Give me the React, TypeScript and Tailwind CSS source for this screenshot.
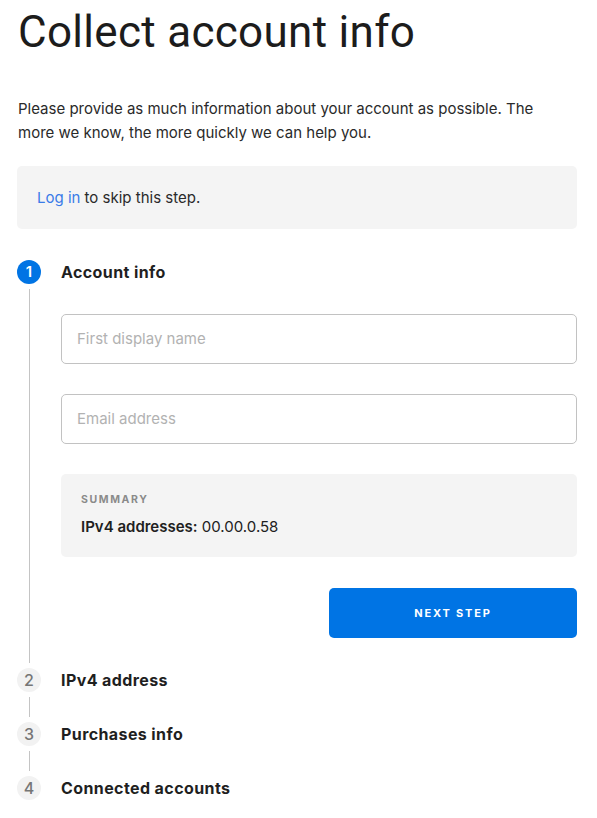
import React from "react";

function StepCircle({ n, active }: { n: number; active?: boolean }) {
  return (
    <div
      className={
        active
          ? "w-6 h-6 rounded-full bg-[#0074e4] text-white flex items-center justify-center text-[15px] font-semibold shrink-0"
          : "w-6 h-6 rounded-full bg-[#f2f2f2] text-[#767676] flex items-center justify-center text-[16px] font-medium shrink-0"
      }
    >
      {n}
    </div>
  );
}

function Step({
  n,
  title,
  active,
  line,
  children,
}: {
  n: number;
  title: string;
  active?: boolean;
  line: boolean;
  children?: React.ReactNode;
}) {
  return (
    <div className="flex">
      <div className="w-6 flex flex-col items-center shrink-0">
        <StepCircle n={n} active={active} />
        {line && <div className="w-px flex-1 bg-[#c4c4c4] my-[5px]" />}
      </div>
      <div className={"flex-1 ml-5 " + (line ? "pb-[30px]" : "")}>
        <div className="h-6 flex items-center text-[16px] font-bold text-[#1f1f1f] tracking-[0.4px]">
          {title}
        </div>
        {children}
      </div>
    </div>
  );
}

export default function App() {
  return (
    <div
      className="w-[597px] min-h-[818px] bg-white pl-[17px] pr-5 text-[#202020]"
      style={{ fontFamily: "Inter, 'Liberation Sans', sans-serif" }}
    >
      <h1
        className="pt-[6px] text-[44px] leading-[52px] font-normal tracking-[0.3px] text-[#1c1c1c] pl-px"
        style={{ fontFamily: "Roboto, 'Liberation Sans', sans-serif" }}
      >
        Collect account info
      </h1>
      <p className="mt-[39px] max-w-[540px] text-[15px] leading-[24px] text-[#2a2a2a] pl-px">
        Please provide as much information about your account as possible. The
        more we know, the more quickly we can help you.
      </p>
      <div className="mt-[21px] h-[63px] rounded-[5px] bg-[#f4f4f4] flex items-center px-5 text-[15px] text-[#2a2a2a] pt-px">
        <span>
          <a className="text-[#3a7be8]">Log in</a> to skip this step.
        </span>
      </div>

      <div className="mt-[31px]">
        <Step n={1} title="Account info" active line>
          <div className="pt-[30px] flex flex-col">
            <div className="h-[50px] rounded-[5px] border border-[#c2c2c2] flex items-center px-[15px] text-[15px] text-[#b2b2b2]">
              First display name
            </div>
            <div className="mt-[30px] h-[50px] rounded-[5px] border border-[#c2c2c2] flex items-center px-[15px] text-[15px] text-[#b2b2b2]">
              Email address
            </div>
            <div className="mt-[30px] h-[83px] rounded-[5px] bg-[#f4f4f4] px-5 pt-[19px]">
              <div className="text-[10.5px] font-bold tracking-[1.6px] text-[#8a8a8a] leading-[14px]">
                SUMMARY
              </div>
              <div className="mt-[10px] text-[15px] leading-[20px] text-[#202020]">
                <span className="font-semibold">IPv4 addresses:</span> 00.00.0.58
              </div>
            </div>
            <div className="mt-[31px] flex justify-end">
              <button className="w-[248px] h-[50px] rounded-[5px] bg-[#0074e4] text-white text-[11px] font-bold tracking-[1.8px]">
                NEXT STEP
              </button>
            </div>
          </div>
        </Step>
        <Step n={2} title="IPv4 address" line />
        <Step n={3} title="Purchases info" line />
        <Step n={4} title="Connected accounts" line={false} />
      </div>
    </div>
  );
}
